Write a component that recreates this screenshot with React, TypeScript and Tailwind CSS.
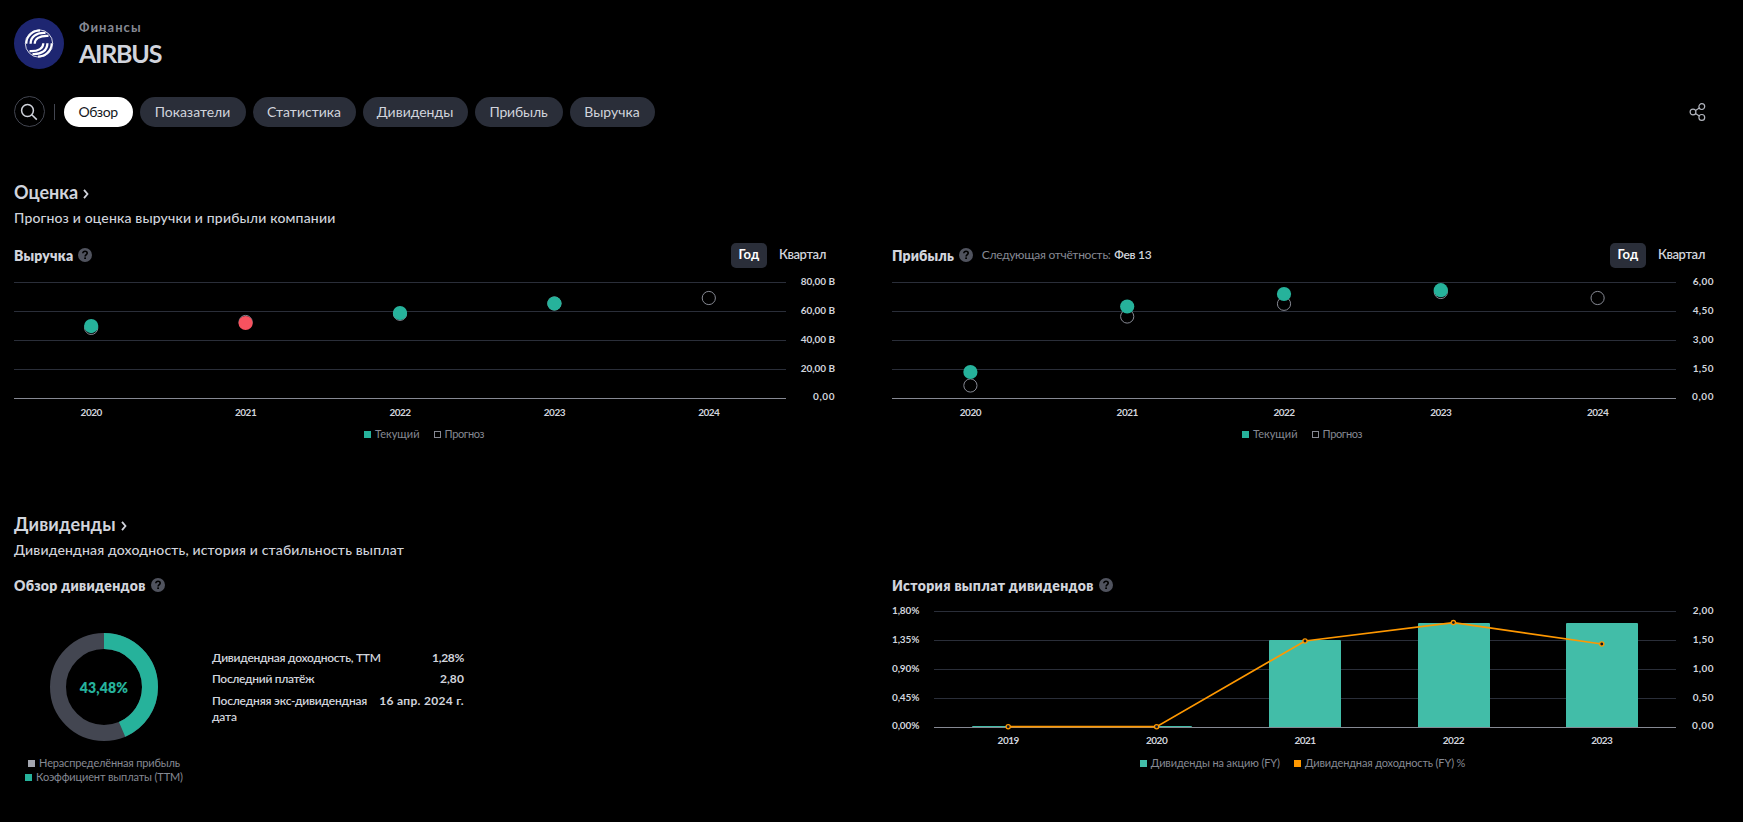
import type { ReactNode } from "react";

const GRID_STEP = 29;

function Help() {
  return (
    <span className="-mt-px flex h-[14px] w-[14px] shrink-0 items-center justify-center rounded-full bg-[#50535e]">
      <svg width="14" height="14" viewBox="0 0 14 14" fill="none">
        <path d="M4.8 5.3C4.8 4 5.8 3.300 7 3.300c1.300 0 2.200.7 2.200 1.900C9.200 6.700 7.100 6.700 7.100 8.600" stroke="#000" strokeWidth="1.6" />
        <rect x="6.2" y="9.4" width="1.8" height="1.6" fill="#000" />
      </svg>
    </span>
  );
}

function Logo() {
  const swirl = (
    <g>
      <path d="M-12.600 .3C-12.600-8-5.500-13 1-13" strokeWidth="1.900" />
      <path d="M-8.400 .3C-8.400-6.500-3-11 6.500-10.500" strokeWidth="2.300" />
      <path d="M-4.300 .3C-4.300-4.500 0-8 9.500-7.600" strokeWidth="2.200" />
    </g>
  );
  return (
    <svg width="50" height="51" viewBox="-25 -25.5 50 51" fill="none">
      <ellipse rx="25" ry="25.5" fill="#1e2671" />
      <g stroke="#fff">
        <circle r="13.700" strokeWidth=".8" />
        {swirl}
        <g transform="rotate(180)">{swirl}</g>
      </g>
    </svg>
  );
}

function SectionTitle({ children, sub, tracking }: { children: string; sub: string; tracking: string }) {
  return (
    <>
      <h2 className={"flex h-6 items-center pb-[2px] text-[18px] font-bold " + tracking}>
        {children}
        <svg className="mt-[3px] ml-[5px]" width="6" height="10" viewBox="0 0 6 10" fill="none" stroke="#d1d4dc" strokeWidth="1.8">
          <path d="M1 .8 4.500 5 1 9.200" />
        </svg>
      </h2>
      <p className="mt-[3px] h-5 text-[14px] leading-5 font-medium tracking-[0.16px]">{sub}</p>
    </>
  );
}

function PeriodToggle({ className = "" }: { className?: string }) {
  return (
    <div className={"ml-auto flex h-[25px] items-center text-[13px] leading-none " + className}>
      <button className="h-[25px] w-9 rounded-[5px] bg-[#2a2e39] pb-[3px] font-bold tracking-[0.3px] text-white">Год</button>
      <button className="pr-2 pb-[3px] pl-3 font-semibold tracking-[-0.4px]">Квартал</button>
    </div>
  );
}

function ChartHeader({ title, tracking, children }: { title: string; tracking: string; children?: ReactNode }) {
  return (
    <div className="flex h-[25px] items-center">
      <h3 className={"mt-px mr-[5px] text-[14px] leading-5 font-extrabold whitespace-nowrap " + tracking}>{title}</h3>
      <Help />
      {children}
    </div>
  );
}

function Legend({ items, className = "" }: { items: { label: string; swatch: string; tracking: string }[]; className?: string }) {
  return (
    <div className={"flex justify-center gap-[14px] text-[11px] leading-4 text-[#868993] " + className}>
      {items.map((i) => (
        <span key={i.label} className="flex h-4 items-center whitespace-nowrap">
          <i className={"mr-1 h-[7px] w-[7px] " + i.swatch} />
          <span className={i.tracking}>{i.label}</span>
        </span>
      ))}
    </div>
  );
}

function YLabels({ values, className }: { values: string[]; className: string }) {
  return (
    <div className={"flex shrink-0 flex-col text-[10px] font-bold whitespace-nowrap " + className}>
      {values.map((v, i) => (
        <span key={v} className={i === values.length - 1 ? "h-[27px] leading-[27px] tracking-[0.55px]" : "h-[29px] leading-[29px]"}>{v}</span>
      ))}
    </div>
  );
}

function Grid({ width, top }: { width: number; top: number }) {
  return (
    <>
      {[0, 1, 2, 3, 4].map((i) => (
        <line key={i} x1="0" x2={width} y1={top + i * GRID_STEP} y2={top + i * GRID_STEP} stroke={i === 4 ? "#868993" : "#2a2e39"} />
      ))}
    </>
  );
}

function XLabels({ years, className }: { years: number[]; className: string }) {
  return (
    <div className={"flex h-4 text-center text-[10px] leading-4 font-bold tracking-[-0.5px] " + className}>
      {years.map((y) => (
        <span key={y} className="flex-1">{y}</span>
      ))}
    </div>
  );
}

type Point = { forecast: number; actual?: number; color?: string };

function EstimateChart({ width, points, labels, plotClass, labelClass }: { width: number; points: Point[]; labels: string[]; plotClass: string; labelClass: string }) {
  return (
    <>
      <div className="flex h-[136px]">
        <svg className="shrink-0" width={width} height="136" viewBox={`0 0 ${width} 136`}>
          <Grid width={width} top={14.5} />
          {points.map((p, i) => {
            const x = (width / 5) * (i + 0.5);
            return (
              <g key={i}>
                <circle cx={x} cy={p.forecast} r="6.6" fill="#000" stroke="#868993" />
                {p.actual !== undefined && <circle cx={x} cy={p.actual} r="7.1" fill={p.color ?? "#26b29b"} />}
              </g>
            );
          })}
        </svg>
        <YLabels values={labels} className={"-mt-px " + labelClass} />
      </div>
      <XLabels years={[2020, 2021, 2022, 2023, 2024]} className={plotClass} />
      <Legend
        className="mt-[6px] pr-px"
        items={[
          { label: "Текущий", swatch: "bg-[#26b29b]", tracking: "tracking-[0px]" },
          { label: "Прогноз", swatch: "border border-[#868993]", tracking: "tracking-[-0.4px]" },
        ]}
      />
    </>
  );
}

function DividendChart() {
  const bars = [
    { x: 38, y: 128 },
    { x: 186, y: 128 },
    { x: 335, y: 42 },
    { x: 484, y: 25 },
    { x: 632, y: 25 },
  ];
  const line = [
    [74.200, 128.700],
    [222.600, 128.700],
    [371, 43],
    [519.400, 24.600],
    [667.800, 46],
  ];
  return (
    <>
      <div className="flex h-[136px]">
        <YLabels values={["1,80%", "1,35%", "0,90%", "0,45%", "0,00%"]} className="-mt-[2px] w-[42px] [&>span]:tracking-[-0.15px]" />
        <svg className="shrink-0" width="742" height="136" viewBox="0 0 742 136">
          <Grid width={742} top={13.5} />
          {bars.map((b) => (
            <path key={b.x} fill="#42bda8" d={`M${b.x} 129V${b.y + 1}q0-1 1-1h70q1 0 1 1V129z`} />
          ))}
          <polyline points={line.map((p) => p.join(",")).join(" ")} fill="none" stroke="#ff9800" strokeWidth="1.7" />
          {line.map(([x, y]) => (
            <circle key={x} cx={x} cy={y} r="2.1" fill="#131722" stroke="#ff9800" strokeWidth="1.3" />
          ))}
        </svg>
        <YLabels values={["2,00", "1,50", "1,00", "0,50", "0,00"]} className="-mt-[2px] w-[38px] text-right tracking-[0.4px]" />
      </div>
      <XLabels years={[2019, 2020, 2021, 2022, 2023]} className="-mt-[2px] ml-[42px] w-[742px]" />
      <Legend
        className="mt-[7px]"
        items={[
          { label: "Дивиденды на акцию (FY)", swatch: "bg-[#42bda8]", tracking: "tracking-[-0.12px]" },
          { label: "Дивидендная доходность (FY) %", swatch: "bg-[#ff9800]", tracking: "tracking-[-0.15px]" },
        ]}
      />
    </>
  );
}

function Donut() {
  const share = 0.4348;
  const circumference = 2 * Math.PI * 46;
  return (
    <div className="mt-[35px] grid h-[108px] w-[108px] place-items-center self-center">
      <svg className="col-start-1 row-start-1" width="108" height="108" viewBox="0 0 108 108" fill="none" strokeWidth="16">
        <circle cx="54" cy="54" r="46" stroke="#434651" />
        <circle cx="54" cy="54" r="46" stroke="#26b29b" strokeDasharray={`${circumference * share} ${circumference}`} transform="rotate(-90 54 54)" />
      </svg>
      <span className="col-start-1 row-start-1 mt-px text-[14px] font-extrabold tracking-[0.15px] text-[#26b29b]">43,48%</span>
    </div>
  );
}

const tabs = [
  { label: "Обзор", cls: "w-[69px] bg-white text-[#131722] tracking-[-0.4px]" },
  { label: "Показатели", cls: "w-[106px] bg-[#2a2e39]" },
  { label: "Статистика", cls: "w-[103px] bg-[#2a2e39]" },
  { label: "Дивиденды", cls: "w-[105px] bg-[#2a2e39]" },
  { label: "Прибыль", cls: "w-[88px] bg-[#2a2e39] tracking-[-0.15px]" },
  { label: "Выручка", cls: "w-[85px] bg-[#2a2e39]" },
];

const facts = [
  { label: "Дивидендная доходность, ТТМ", value: "1,28%", row: "h-[21px]", l: "tracking-[-0.27px]", v: "tracking-[-0.3px]" },
  { label: "Последний платёж", value: "2,80", row: "h-[22px]", l: "tracking-[-0.33px]", v: "tracking-[0.1px]" },
  { label: "Последняя экс-дивидендная дата", value: "16 апр. 2024 г.", row: "h-8", l: "w-[157px] tracking-[-0.2px]", v: "tracking-[0.3px]" },
];

export default function App() {
  return (
    <div className="h-[822px] w-[1743px] overflow-hidden bg-black pt-[18px] pr-[30px] pl-[14px] font-['Lato','Open_Sans',sans-serif] text-[#d1d4dc]">
      <header className="flex h-[51px]">
        <Logo />
        <div className="ml-[15px]">
          <div className="h-[18px] text-[13px] leading-[18px] font-bold tracking-[1.05px] text-[#868993]">Финансы</div>
          <h1 className="text-[25px] leading-[34px] font-bold tracking-[-1.25px]">AIRBUS</h1>
        </div>
      </header>

      <nav className="mt-[27px] flex h-[31px] items-center">
        <button className="flex h-[31px] w-[31px] items-center justify-center rounded-full border border-[#434651]">
          <svg className="-ml-px" width="18" height="18" viewBox="0 0 18 18" fill="none" stroke="#d1d4dc" strokeWidth="1.500">
            <circle cx="7.500" cy="7.500" r="5.900" />
            <path d="m11.800 11.800 5 4.800" />
          </svg>
        </button>
        <i className="mr-[9px] ml-[9px] h-4 w-px bg-[#434651]" />
        <div className="flex gap-[7px] text-[14px]">
          {tabs.map((t) => (
            <button key={t.label} className={"h-[30px] rounded-full pr-px pb-px " + t.cls}>{t.label}</button>
          ))}
        </div>
        <svg className="mr-[7px] ml-auto" width="17" height="18" viewBox="0 0 17 18" fill="none" stroke="#b2b5be" strokeWidth="1.200">
          <circle cx="4" cy="9" r="2.900" />
          <circle cx="12.800" cy="3.600" r="2.900" />
          <circle cx="12.800" cy="14.400" r="2.900" />
          <path d="m6.500 7.500 3.800-2.400M6.500 10.500l3.800 2.400" />
        </svg>
      </nav>

      <section className="mt-[54px]">
        <SectionTitle sub="Прогноз и оценка выручки и прибыли компании" tracking="tracking-[0px]">Оценка</SectionTitle>
        <div className="mt-[15px] grid grid-cols-[821px_821px] gap-x-[57px]">
          <div>
            <ChartHeader title="Выручка" tracking="tracking-[0.2px]">
              <PeriodToggle className="pr-px" />
            </ChartHeader>
            <EstimateChart
              width={772}
              plotClass="w-[772px]"
              labelClass="w-[49px] text-right tracking-[-0.05px]"
              labels={["80,00 B", "60,00 B", "40,00 B", "20,00 B", "0,00"]}
              points={[
                { actual: 58.100, forecast: 59.900 },
                { actual: 55, forecast: 54, color: "#f7525f" },
                { actual: 45, forecast: 45.800 },
                { actual: 35.500, forecast: 35.500 },
                { forecast: 30 },
              ]}
            />
          </div>
          <div>
            <ChartHeader title="Прибыль" tracking="tracking-[0.1px]">
              <span className="-mt-[2px] ml-[9px] text-[12px] tracking-[-0.28px] whitespace-nowrap text-[#868993]">
                Следующая отчётность: <b className="ml-px font-semibold text-[#d1d4dc]">Фев 13</b>
              </span>
              <PeriodToggle />
            </ChartHeader>
            <EstimateChart
              width={784}
              plotClass="w-[784px]"
              labelClass="w-[38px] text-right tracking-[0.4px]"
              labels={["6,00", "4,50", "3,00", "1,50", "0,00"]}
              points={[
                { actual: 104, forecast: 117.500 },
                { actual: 38.500, forecast: 48.500 },
                { actual: 26, forecast: 35.800 },
                { actual: 22.200, forecast: 24 },
                { forecast: 30 },
              ]}
            />
          </div>
        </div>
      </section>

      <section className="mt-[71px]">
        <SectionTitle sub="Дивидендная доходность, история и стабильность выплат" tracking="tracking-[0.15px]">Дивиденды</SectionTitle>
        <div className="mt-[13px] grid grid-cols-[821px_821px] gap-x-[57px]">
          <div>
            <ChartHeader title="Обзор дивидендов" tracking="tracking-[0.3px]" />
            <div className="flex">
              <div className="flex w-[180px] flex-col">
                <Donut />
                <Legend className="mt-[14px]" items={[{ label: "Нераспределённая прибыль", swatch: "bg-[#a3a6af]", tracking: "tracking-[-0.16px]" }]} />
                <Legend className="-mt-[2px]" items={[{ label: "Коэффициент выплаты (TTM)", swatch: "bg-[#26b29b]", tracking: "tracking-[-0.14px]" }]} />
              </div>
              <dl className="mt-[52px] ml-[18px] w-[252px] text-[12px] leading-4 font-semibold whitespace-nowrap">
                {facts.map((f) => (
                  <div key={f.label} className={"flex justify-between " + f.row}>
                    <dt className={"whitespace-normal " + f.l}>{f.label}</dt>
                    <dd className={"font-bold " + f.v}>{f.value}</dd>
                  </div>
                ))}
              </dl>
            </div>
          </div>
          <div>
            <ChartHeader title="История выплат дивидендов" tracking="tracking-[0.35px]" />
            <DividendChart />
          </div>
        </div>
      </section>
    </div>
  );
}
